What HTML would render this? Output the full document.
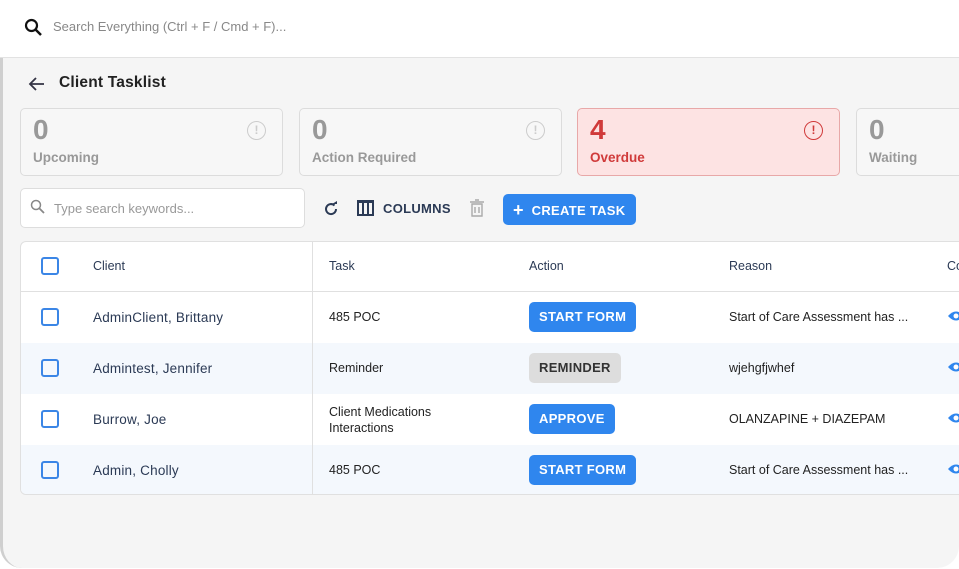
<!DOCTYPE html>
<html><head><meta charset="utf-8"><style>
*{box-sizing:border-box;margin:0;padding:0}
body{width:959px;height:569px;overflow:hidden;background:#fff;font-family:"Liberation Sans",sans-serif;position:relative;color:#222}
.top{position:absolute;left:0;top:0;width:959px;height:58px;background:#fff;border-bottom:1px solid #e2e2e2}
.top span{position:absolute;left:53px;top:19px;font-size:13px;color:#888}
.panel{position:absolute;left:0;top:58px;width:959px;height:510px;background:#f5f5f5;border-left:3px solid #cfcfcf;border-radius:0 0 22px 22px;overflow:hidden}
.abs{position:absolute}
.card{position:absolute;top:50px;height:68px;width:263px;border:1px solid #dcdcdc;border-radius:5px;background:#f7f7f7}
.card .n{position:absolute;left:12px;top:5px;font-size:28px;color:#999;font-weight:bold}
.card .l{position:absolute;left:12px;top:41px;font-size:13.5px;color:#999;font-weight:bold}
.card .i{position:absolute;right:16px;top:12px;width:19px;height:19px;border:1.5px solid #ccc;border-radius:50%;color:#ccc;font-size:12px;text-align:center;line-height:16px;font-weight:bold}
.card.red{background:#fde3e3;border-color:#e8a8a8}
.card.red .n,.card.red .l{color:#d03a3a}
.card.red .i{border-color:#d03a3a;color:#d03a3a}
.btn{position:absolute;height:30px;border-radius:5px;background:#2f86ee;color:#fff;font-size:13px;line-height:30px;padding:0 10px;letter-spacing:.3px;font-weight:bold}
.table{position:absolute;left:17px;top:183px;width:960px;height:254px;background:#fff;border:1px solid #e0e0e0;border-radius:6px;overflow:hidden}
.row{position:absolute;left:0;width:100%;height:51px;font-size:12.5px}
.row div{position:absolute}
.cb{left:20px;width:18px;height:18px;border:2px solid #3b86e6;border-radius:3px}
.name{left:72px;color:#2b3a55;font-size:13.5px;letter-spacing:.2px}
.eye{position:absolute;left:927px;top:18px}
</style></head><body>
<div class="top">
<svg class="abs" style="left:24px;top:18px" width="20" height="20" viewBox="0 0 20 20"><circle cx="7.5" cy="7.5" r="5.5" fill="none" stroke="#111" stroke-width="2.2"/><path d="M11.5 11.5L17 17" stroke="#111" stroke-width="2.5"/></svg>
<span>Search Everything (Ctrl + F / Cmd + F)...</span></div>
<div class="panel">
<svg class="abs" style="left:25px;top:18px" width="18" height="16" viewBox="0 0 18 16"><path d="M16 8H3M8 2L2 8l6 6" fill="none" stroke="#334" stroke-width="1.8"/></svg>
<div class="abs" style="left:56px;top:16px;font-size:15.5px;color:#222;font-weight:bold;letter-spacing:.2px">Client Tasklist</div>
<div class="card" style="left:17px"><div class="n">0</div><div class="l">Upcoming</div><div class="i">!</div></div>
<div class="card" style="left:296px"><div class="n">0</div><div class="l">Action Required</div><div class="i">!</div></div>
<div class="card red" style="left:574px"><div class="n">4</div><div class="l">Overdue</div><div class="i">!</div></div>
<div class="card" style="left:853px"><div class="n">0</div><div class="l">Waiting</div></div>
<div class="abs" style="left:17px;top:130px;width:285px;height:40px;background:#fff;border:1px solid #ddd;border-radius:5px"></div>
<svg class="abs" style="left:27px;top:141px" width="16" height="16" viewBox="0 0 16 16"><circle cx="6" cy="6" r="4.5" fill="none" stroke="#888" stroke-width="1.5"/><path d="M9.5 9.5L14 14" stroke="#888" stroke-width="1.8"/></svg>
<div class="abs" style="left:51px;top:143px;font-size:13px;color:#999">Type search keywords...</div>
<svg class="abs" style="left:320px;top:143px" width="16" height="16" viewBox="0 0 16 16"><path d="M13 8a5 5 0 1 1-1.5-3.5" fill="none" stroke="#2b3a55" stroke-width="2"/><path d="M9 3h5V0z" fill="#2b3a55"/></svg>
<svg class="abs" style="left:354px;top:142px" width="17" height="16" viewBox="0 0 17 16"><rect x="1" y="1" width="15" height="14" fill="none" stroke="#2b3a55" stroke-width="2"/><path d="M1 2h15M6 2v13M11 2v13" stroke="#2b3a55" stroke-width="2"/></svg>
<div class="abs" style="left:380px;top:143px;font-size:13px;color:#2b3a55;letter-spacing:.3px;font-weight:bold">COLUMNS</div>
<svg class="abs" style="left:467px;top:141px" width="14" height="18" viewBox="0 0 14 18"><path d="M2 5h10v12H2zM0 3h14M5 1h4M5 8v6M9 8v6" fill="none" stroke="#aaa" stroke-width="1.4"/></svg>
<div class="btn" style="left:500px;top:136px;width:133px;height:31px;line-height:31px"><span style="font-size:18px;position:relative;top:1px">+</span>&nbsp;&nbsp;CREATE TASK</div>
<div class="table">
<div class="row" style="top:0;height:50px;border-bottom:1px solid #e0e0e0;font-size:12.5px;color:#2b3a55">
<div class="cb" style="top:15px"></div><div style="left:72px;top:17px">Client</div><div style="left:308px;top:17px">Task</div><div style="left:508px;top:17px">Action</div><div style="left:708px;top:17px">Reason</div><div style="left:926px;top:17px">Co</div></div>
<div class="row" style="top:50px;background:#fff"><div class="cb" style="top:16px"></div><div class="name" style="top:18px">AdminClient, Brittany</div><div style="left:308px;top:18px">485 POC</div><div class="btn" style="left:508px;top:10px;padding:0 10px">START FORM</div><div style="left:708px;top:18px">Start of Care Assessment has ...</div><svg class="eye" width="16" height="12" viewBox="0 0 16 12"><path d="M0 6Q8-3 16 6Q8 15 0 6z" fill="#2f86ee"/><circle cx="8" cy="6" r="2.5" fill="#fff"/></svg></div>
<div class="row" style="top:101px;background:#f4f8fd"><div class="cb" style="top:16px"></div><div class="name" style="top:18px">Admintest, Jennifer</div><div style="left:308px;top:18px">Reminder</div><div class="btn" style="left:508px;top:10px;background:#ddd;color:#333">REMINDER</div><div style="left:708px;top:18px">wjehgfjwhef</div><svg class="eye" width="16" height="12" viewBox="0 0 16 12"><path d="M0 6Q8-3 16 6Q8 15 0 6z" fill="#2f86ee"/><circle cx="8" cy="6" r="2.5" fill="#fff"/></svg></div>
<div class="row" style="top:152px;background:#fff"><div class="cb" style="top:16px"></div><div class="name" style="top:18px">Burrow, Joe</div><div style="left:308px;top:10px;line-height:16px">Client Medications<br>Interactions</div><div class="btn" style="left:508px;top:10px">APPROVE</div><div style="left:708px;top:18px">OLANZAPINE + DIAZEPAM</div><svg class="eye" width="16" height="12" viewBox="0 0 16 12"><path d="M0 6Q8-3 16 6Q8 15 0 6z" fill="#2f86ee"/><circle cx="8" cy="6" r="2.5" fill="#fff"/></svg></div>
<div class="row" style="top:203px;background:#f4f8fd"><div class="cb" style="top:16px"></div><div class="name" style="top:18px">Admin, Cholly</div><div style="left:308px;top:18px">485 POC</div><div class="btn" style="left:508px;top:10px">START FORM</div><div style="left:708px;top:18px">Start of Care Assessment has ...</div><svg class="eye" width="16" height="12" viewBox="0 0 16 12"><path d="M0 6Q8-3 16 6Q8 15 0 6z" fill="#2f86ee"/><circle cx="8" cy="6" r="2.5" fill="#fff"/></svg></div>
<div class="abs" style="left:291px;top:0;width:1px;height:254px;background:#e0e0e0"></div>
</div>
</div>
</body></html>
